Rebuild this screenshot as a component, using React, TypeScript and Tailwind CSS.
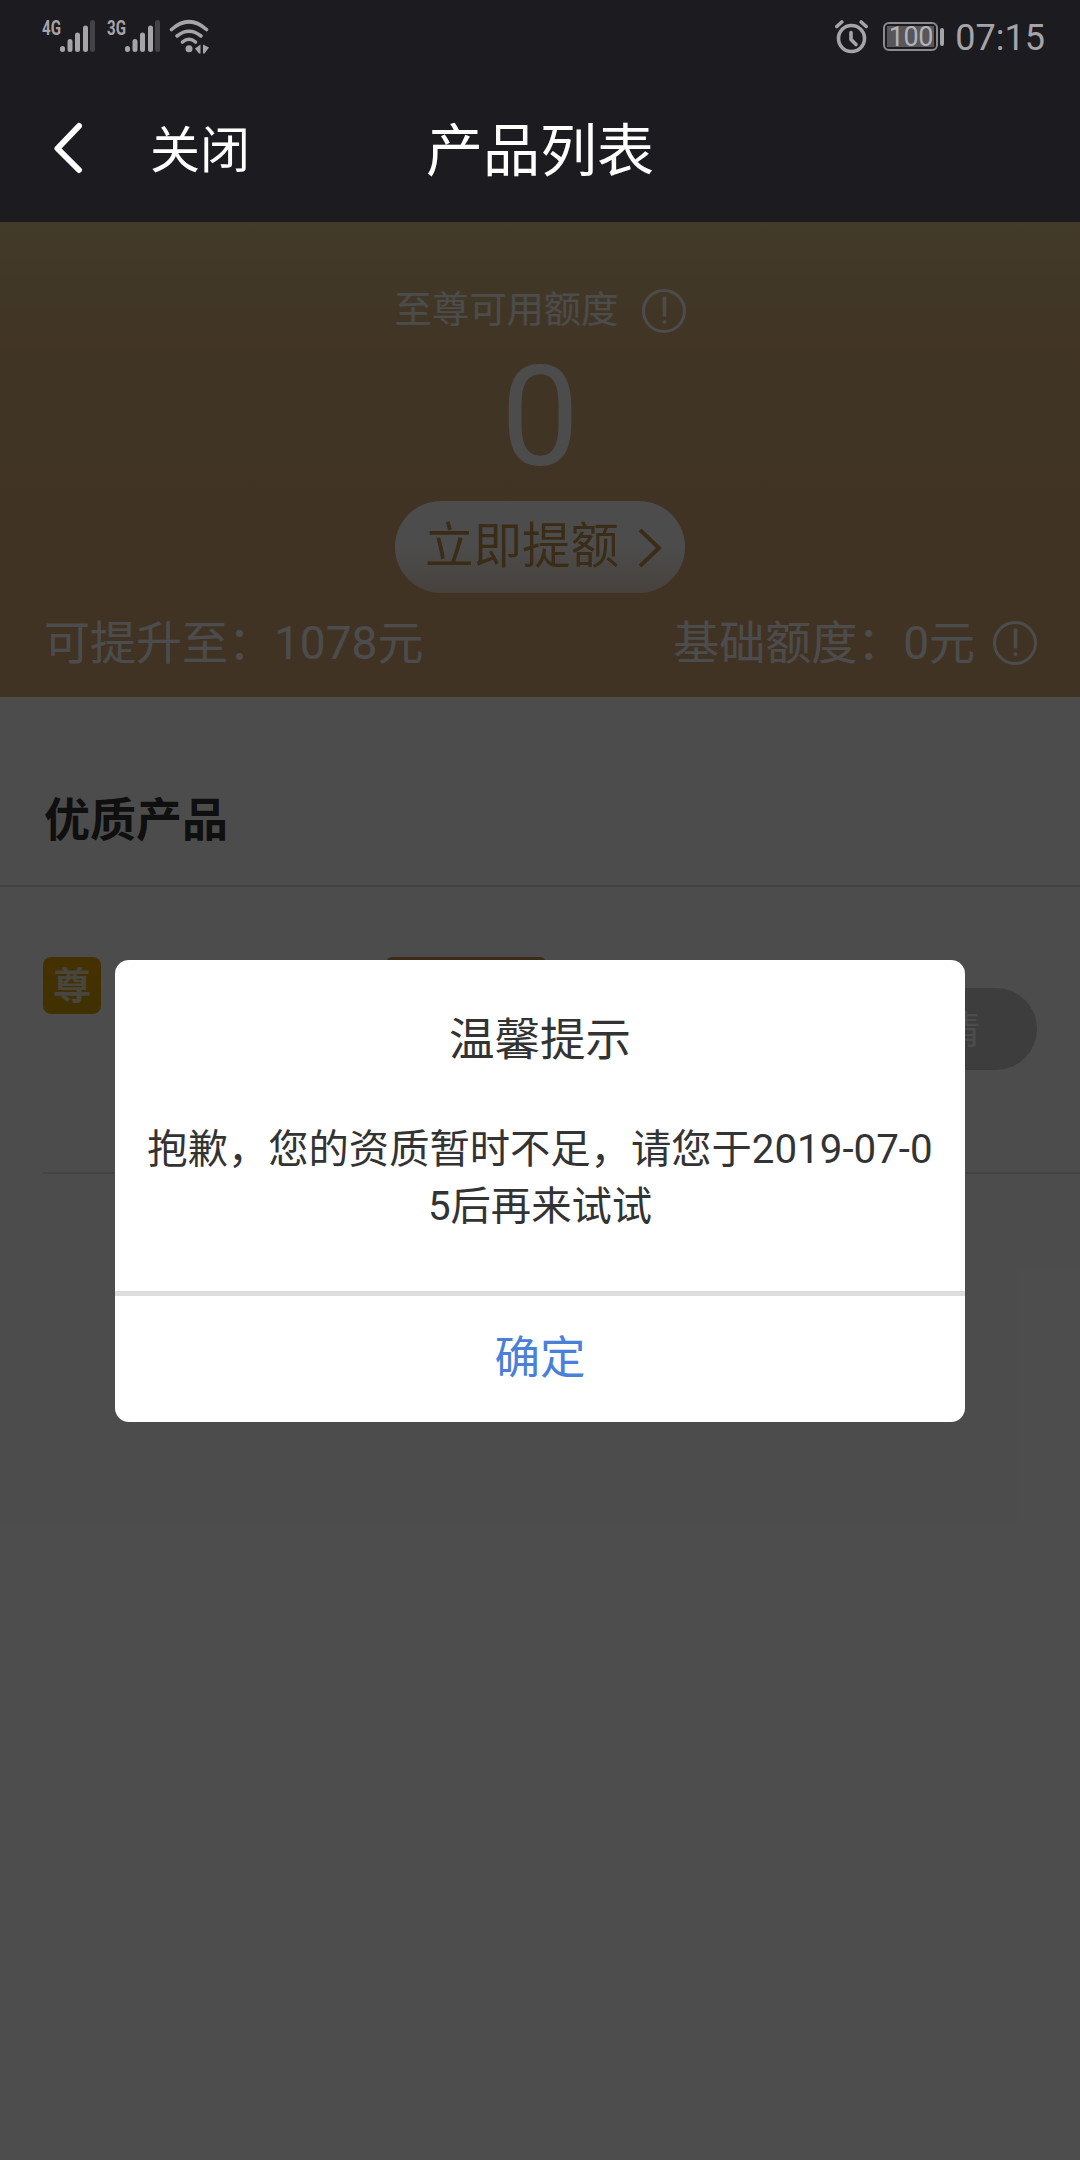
function Signal({ label }: { label: string }) {
  return (
    <div className="relative h-[36px] w-[56px]">
      <svg width="56" height="36" viewBox="0 0 56 36">
        <g strokeWidth="5" strokeLinecap="round" stroke="#a5a4a8">
          <path d="M21.500 29.500v1M29 22.500v8M36.500 16v14.500M44.500 9v21.500" />
          <path d="M51.500 3.500v27" stroke="#434247" />
        </g>
      </svg>
      <span className="absolute -top-[3px] left-px origin-left scale-x-[0.72] text-[21px] leading-[24px] font-bold text-[#a5a4a8]">
        {label}
      </span>
    </div>
  );
}

function Wifi() {
  return (
    <svg width="42" height="36" viewBox="0 0 42 36">
      <g fill="none" stroke="#a5a4a8" strokeWidth="3.6" strokeLinecap="round">
        <path d="M2.500 10.500Q20 -5 37.500 10.500" />
        <path d="M8 17Q20 7.500 32 17" />
        <path d="M13.500 23Q20 17.500 26.500 23" />
      </g>
      <circle cx="20" cy="29.800" r="3.500" fill="#a5a4a8" />
      <path d="M31.500 25.500v9h-1.500l-4-5zM34 25.500l6 3-4.500 6h-1.500z" fill="#a5a4a8" />
    </svg>
  );
}

function AlarmIcon() {
  return (
    <svg width="34" height="36" viewBox="0 0 34 36" fill="none" stroke="#a5a4a8">
      <circle cx="16.500" cy="19.500" r="13" strokeWidth="3.600" />
      <path d="M16 13.500v7l5 5" strokeWidth="3.600" strokeLinecap="round" strokeLinejoin="round" />
      <path d="M1.800 7.500l5-4.500M31.200 7.500l-5-4.500" strokeWidth="3.600" strokeLinecap="round" />
    </svg>
  );
}

function Battery() {
  return (
    <div className="flex items-center gap-[2px]">
      <div className="h-[29px] w-[55px] rounded-[6px] border-2 border-[#8b8a8f] p-[2px]">
        <div className="flex h-full items-center justify-center bg-[#57565b] pt-[2px] text-[27px] leading-none tracking-[-0.4px] text-[#b4b3b7]">
          100
        </div>
      </div>
      <div className="h-[18px] w-[4px] rounded-sm bg-[#a5a4a8]" />
    </div>
  );
}

function InfoIcon() {
  return (
    <svg width="44" height="44" viewBox="0 0 44 44" fill="none" stroke="white" className="shrink-0">
      <circle cx="22" cy="22" r="20.500" strokeWidth="3" />
      <path d="M22.500 7.500v20" strokeWidth="3.500" />
      <circle cx="22.500" cy="33" r="1.500" fill="white" />
    </svg>
  );
}

export default function App() {
  return (
    <div className="relative flex h-[2160px] w-[1080px] flex-col overflow-hidden bg-white font-['Roboto','Noto_Sans_CJK_SC',sans-serif]">
      {/* Status bar */}
      <div className="flex h-[73px] shrink-0 items-center justify-between bg-[#1c1b20] pl-[41px] pr-[35px]">
        <div className="flex items-center">
          <Signal label="4G" />
          <div className="w-[9px]" />
          <Signal label="3G" />
          <div className="w-[7px]" />
          <Wifi />
        </div>
        <div className="flex items-center">
          <AlarmIcon />
          <div className="w-[14px]" />
          <Battery />
          <span className="mt-[3px] ml-[11px] text-[36px] leading-none text-[#a5a4a8]">07:15</span>
        </div>
      </div>

      {/* Title bar */}
      <header className="grid h-[149px] shrink-0 grid-cols-3 items-center bg-[#1c1b20] text-white">
        <div className="flex items-center">
          <svg width="30" height="52" viewBox="0 0 30 52" fill="none" className="ml-[53px]">
            <path
              d="M26 4L4.500 26.500L26 48"
              stroke="white"
              strokeWidth="6"
              strokeLinecap="round"
              strokeLinejoin="round"
            />
          </svg>
          <span className="mt-[7px] ml-[67px] text-[50px] leading-none">关闭</span>
        </div>
        <h1 className="pt-[8px] text-center text-[57px] leading-none">产品列表</h1>
      </header>

      <div className="relative flex-1">
        {/* Credit summary */}
        <section className="flex h-[475px] flex-col items-center bg-linear-to-b from-[#dfc388] via-[#d8ae79] via-30% to-[#d5aa78] text-white">
          <div className="mt-[67px] flex h-[44px] items-center pl-px text-[37.300px] leading-none">
            <span>至尊可用额度</span>
            <span className="ml-[24px]">
              <InfoIcon />
            </span>
          </div>
          <div className="mt-[17px] h-[136px] text-[139px] leading-[136px]">0</div>
          <button className="mt-[15px] flex h-[92px] w-[290px] items-center justify-center rounded-full bg-linear-to-b from-white from-50% to-[#efdccb] pt-px pl-[8px] text-[48.500px] leading-none text-[#c79550]">
            立即提额
            <svg width="26" height="40" viewBox="0 0 26 40" fill="none" className="ml-[18px]">
              <path d="M3 2L22 20L3 38" stroke="currentColor" strokeWidth="4" />
            </svg>
          </button>
          <div className="mt-[27px] flex w-full items-center justify-between pl-[44px] pr-[43px] text-[46px] leading-none">
            <span>可提升至：1078元</span>
            <div className="flex items-center gap-[18px]">
              <span>基础额度：0元</span>
              <InfoIcon />
            </div>
          </div>
        </section>

        {/* Product list */}
        <section>
          <div className="flex h-[190px] items-center border-b-2 border-[#dcdcdc] pl-[44px] pt-[58px]">
            <h2 className="text-[46px] leading-none font-bold text-[#333]">优质产品</h2>
          </div>
          <div className="ml-[43px] flex h-[287px] items-start border-b-2 border-[#e4e4e4] pr-[43px] pt-[70px]">
            <div className="flex h-[57px] w-[58px] shrink-0 items-center justify-center rounded-lg bg-linear-to-b from-[#e8a000] to-[#d8a600] pt-[2px] text-[38px] font-bold text-[#f0e6d0]">
              尊
            </div>
            <span className="ml-[18px] pt-px text-[44px] leading-[50px] text-[#333]">至尊优享借款</span>
            <span className="ml-[3px] flex h-[52px] w-[160px] items-center justify-center rounded-md border-[3px] border-[#c79550] text-[32px] text-[#c79550]">
              额度高
            </span>
            <button className="mt-[31px] ml-auto h-[82px] w-[194px] rounded-full bg-[#cccccc] pt-[2px] pl-[4px] text-[38px] text-white">
              详情
            </button>
          </div>
        </section>

        <div className="absolute inset-0 bg-black/70" />
      </div>

      {/* Notice dialog */}
      <div
        role="dialog"
        className="absolute top-[960px] left-[115px] flex h-[462px] w-[850px] flex-col rounded-[14px] bg-white text-center text-[#333]"
      >
        <h3 className="mt-[53px] text-[45.500px] leading-[56px]">温馨提示</h3>
        <p className="mt-[52px] text-[40.300px] leading-[57px] whitespace-nowrap">
          抱歉，您的资质暂时不足，请您于2019-07-0
          <br />
          5后再来试试
        </p>
        <div className="mt-auto h-[5px] bg-[#dddddd]" />
        <button className="h-[126px] pb-px text-[45.500px] leading-none text-[#4a80d8]">确定</button>
      </div>
    </div>
  );
}
